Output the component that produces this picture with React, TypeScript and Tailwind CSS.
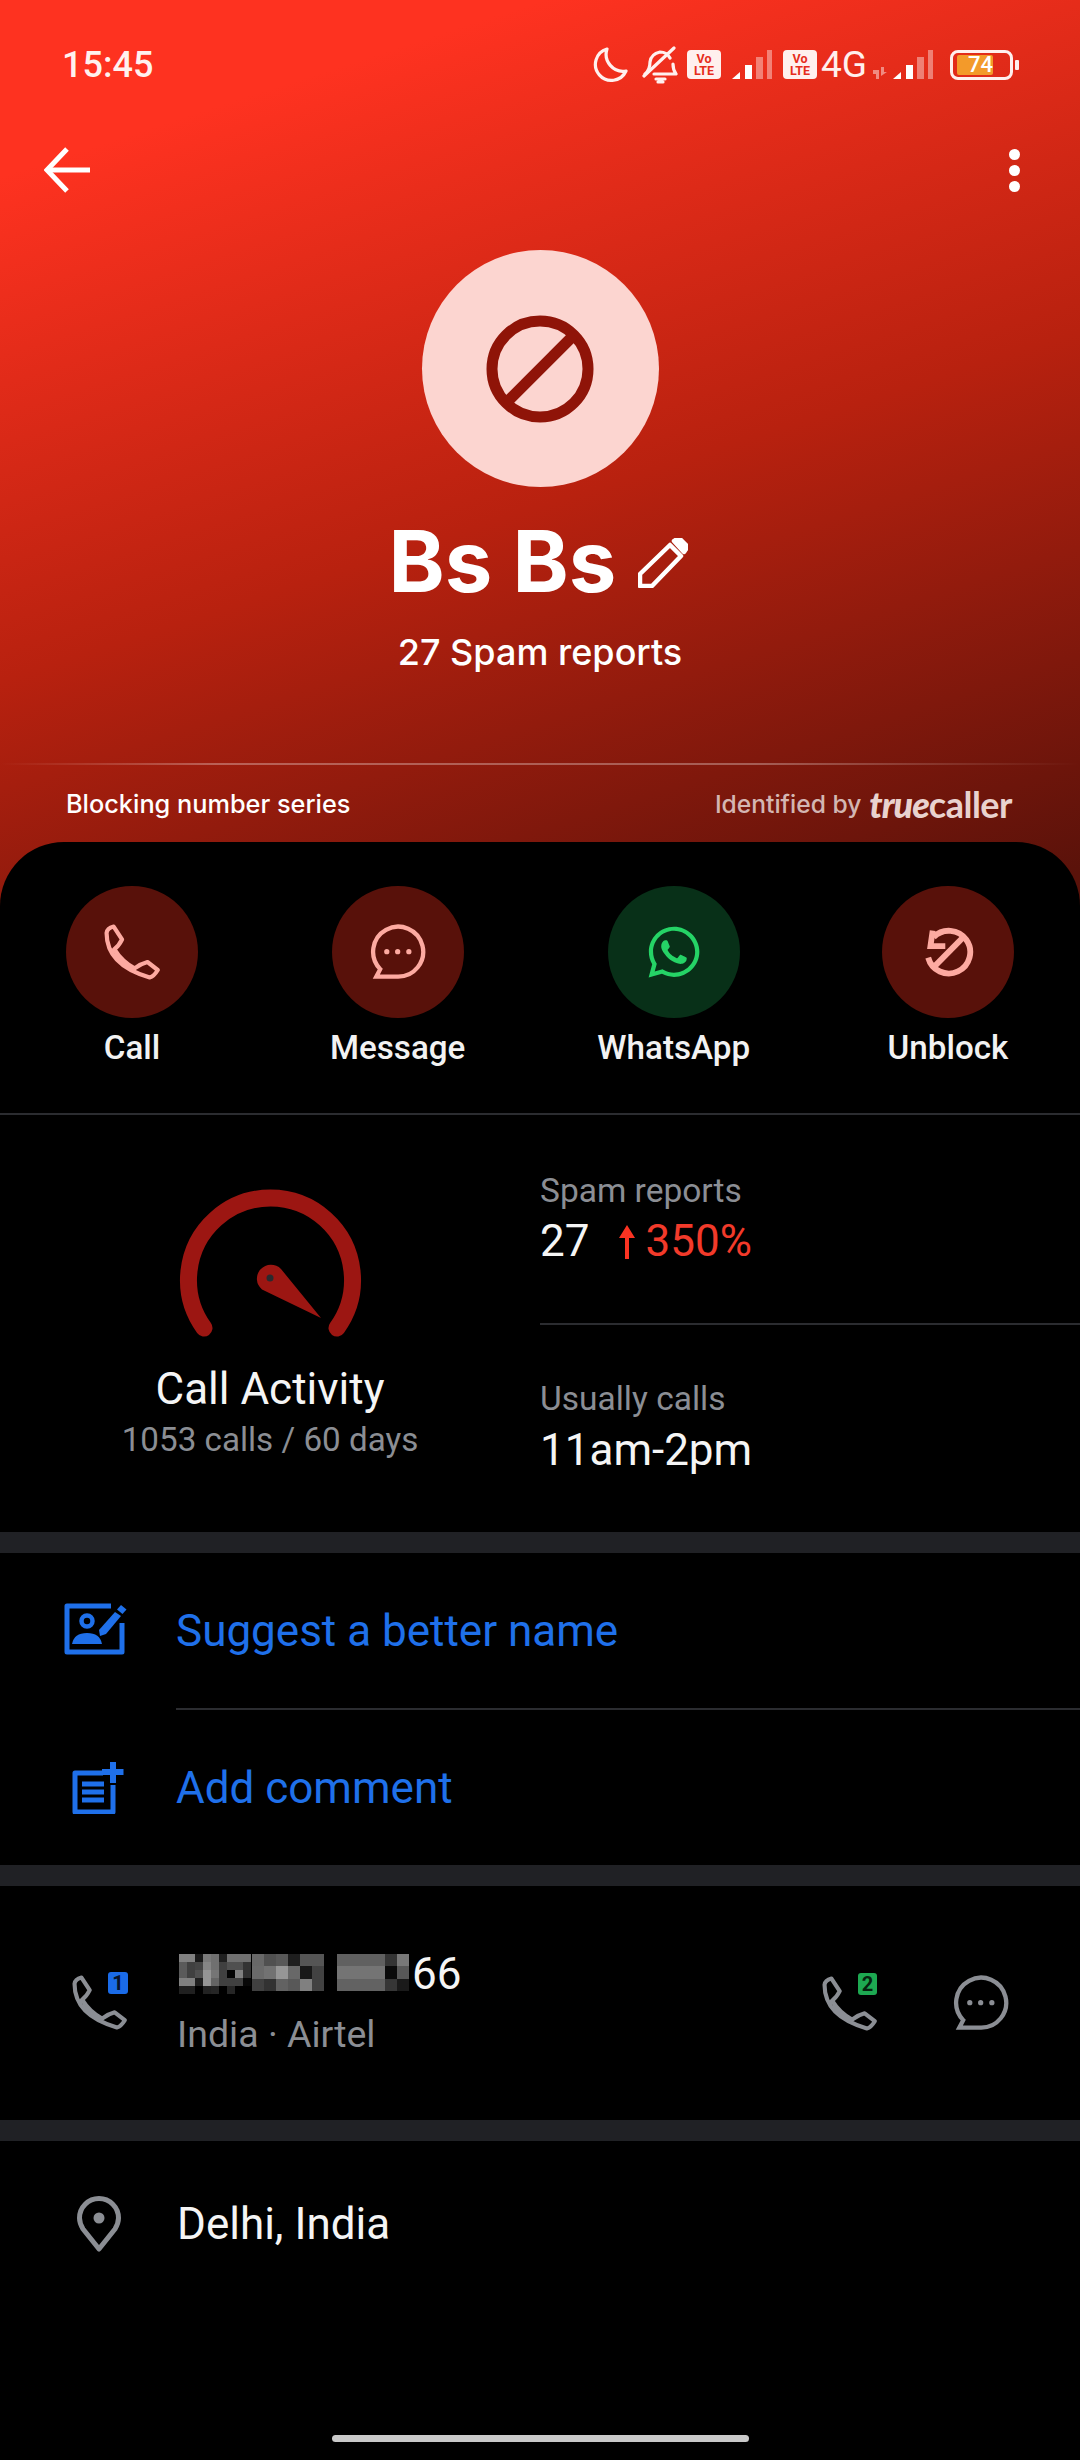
import { FaWhatsapp } from "react-icons/fa";

const roboto = { fontFamily: "Roboto, sans-serif" };

function Phone({ className }: { className: string }) {
  return (
    <svg viewBox="120 102 174 174" className={className} fill="none" stroke="currentColor" strokeWidth="13" strokeLinejoin="round">
      <path d="M150 110 L176 150 Q166 170 152 180 Q175 218 215 240 Q235 225 255 220 L287 245 Q275 265 262 268 Q128 230 128 130 Q130 115 150 110 Z" />
    </svg>
  );
}

function Bubble({ className }: { className: string }) {
  return (
    <svg viewBox="518 104 170 170" className={className} fill="none" stroke="currentColor" strokeWidth="13">
      <path d="M602 264 H537 L549 241 A76 76 0 1 1 602 264 Z" strokeLinejoin="miter" />
      <circle cx="569" cy="188" r="8" fill="currentColor" stroke="none" />
      <circle cx="602" cy="188" r="8" fill="currentColor" stroke="none" />
      <circle cx="636" cy="188" r="8" fill="currentColor" stroke="none" />
    </svg>
  );
}

function Action({ label, bg, children }: { label: string; bg: string; children: React.ReactNode }) {
  return (
    <div className="flex flex-col items-center">
      <div className={`flex h-[132px] w-[132px] items-center justify-center rounded-full ${bg}`}>{children}</div>
      <div className="mt-[10px] text-[33.2px] font-medium leading-[40px] text-[#f2f2f2]">{label}</div>
    </div>
  );
}

function Band() {
  return <div className="h-[21px] bg-[#202125]" />;
}

function Signal({ className }: { className?: string }) {
  return (
    <svg viewBox="0 0 40 30" className={className} fill="#ffffff">
      <path d="M0 29 L8 22 V29 Z" />
      <rect x="13" y="15" width="7" height="14" />
      <rect x="24" y="7" width="7" height="22" opacity="0.4" />
      <rect x="35" y="0" width="5" height="29" opacity="0.4" />
    </svg>
  );
}

function Volte() {
  return (
    <div className="flex h-[29px] w-[34px] flex-col items-center justify-center rounded-[4px] bg-[#fff0ee] text-[12.5px] font-bold leading-[12px] text-[#e62d1c]">
      <span>Vo</span>
      <span>LTE</span>
    </div>
  );
}

const MOSAIC: { x: number; y: number; w: number; h: number; rows: string[][] }[] = [
  {
    x: 2, y: 0, w: 8, h: 8,
    rows: [
      ["80", "80", "18", "7a", "70", "20", "70", "70", "70"],
      ["5a", "40", "45", "85", "70", "40", "50", "50", "34"],
      ["5a", "40", "50", "95", "75", "40", "04", "80", "30"],
      ["80", "80", "20", "95", "65", "40", "40", "40", "08"],
      ["20", "20", "00", "22", "26", "00", "26", "00", "00"],
    ],
  },
  {
    x: 75, y: 0, w: 12, h: 12.3,
    rows: [
      ["68", "50", "58", "1e", "55", "55"],
      ["6a", "72", "96", "68", "18", "42"],
      ["40", "32", "62", "58", "80", "42"],
    ],
  },
  {
    x: 160, y: 0, w: 12, h: 12.3,
    rows: [
      ["60", "60", "60", "60", "34", "78"],
      ["74", "74", "74", "74", "0a", "58"],
      ["62", "62", "62", "62", "36", "1a"],
    ],
  },
];

function Mosaic() {
  return (
    <svg viewBox="0 0 235 40" className="h-[40px] w-[235px]" shapeRendering="crispEdges">
      {MOSAIC.map((g, i) =>
        g.rows.map((row, r) =>
          row.map((v, c) => (
            <rect key={`${i}-${r}-${c}`} x={g.x + c * g.w} y={g.y + r * g.h} width={g.w} height={g.h} fill={`#${v}${v}${v}`} />
          ))
        )
      )}
    </svg>
  );
}

export default function App() {
  return (
    <div className="relative h-[2460px] w-[1080px] overflow-hidden bg-black text-white" style={roboto}>
      <div className="h-[910px] bg-[linear-gradient(162deg,#fe3220_14%,#b8210f_54%,#5a120a_97%)]">
        {/* status bar */}
        <div className="flex h-[130px] items-center pb-[1px] pl-[62px] pr-[61px]">
          <span className="text-[36px] font-medium leading-none text-[#fff1ef]">15:45</span>
          <div className="ml-auto flex items-center text-[#fff0ee]">
            <svg viewBox="0 0 36 36" className="h-[36px] w-[36px]" fill="none" stroke="currentColor" strokeWidth="3.2" strokeLinejoin="round">
              <path d="M15 2 A16 16 0 1 0 34 24 A17 17 0 0 1 15 2 Z" />
            </svg>
            <svg viewBox="0 0 36 38" className="ml-[14px] h-[38px] w-[36px]" fill="none" stroke="currentColor" strokeWidth="3.2" strokeLinecap="round" strokeLinejoin="round">
              <path d="M3 28 Q8 24 8 16 Q9 8 18 6 Q25 6 28 12 M31 18 Q31 24 34 28 H12" />
              <path d="M2 30 L32 2" />
              <path d="M14 33 H23 M16 36 H21" />
            </svg>
            <div className="ml-[9px]"><Volte /></div>
            <Signal className="ml-[11px] h-[30px] w-[40px]" />
            <div className="ml-[11px]"><Volte /></div>
            <span className="ml-[4px] text-[37px] font-normal leading-none">4G</span>
            <svg viewBox="0 0 14 12" className="ml-[6px] mt-[16px] h-[12px] w-[14px]" fill="#ffffff" opacity="0.45">
              <path d="M0 3 H6 V12 H3 V7 H0 Z M8 0 H11 V5 H14 L8 9 Z" />
            </svg>
            <Signal className="ml-[6px] h-[30px] w-[40px]" />
            <div className="relative ml-[17px] flex h-[30px] w-[63px] items-center rounded-[8px] border-[3px] border-[#fff0ee] pl-[4px]">
              <div className="h-[20px] w-[36px] rounded-[2px] bg-[#f39a2a]" />
              <span className="absolute left-[15px] top-[1px] text-[22px] font-medium leading-[22px] text-white">74</span>
            </div>
            <div className="ml-[2px] h-[10px] w-[4px] rounded-[1px] bg-[#fff0ee]" />
          </div>
        </div>
        {/* nav */}
        <div className="mt-[10px] flex h-[60px] items-center justify-between pl-[44px] pr-[60px]">
          <svg viewBox="0 0 46 46" className="h-[46px] w-[46px]" fill="none" stroke="#fff" strokeWidth="5">
            <path d="M46 23 H4" />
            <path d="M23 2 L3 23 L23 44" />
          </svg>
          <div className="flex flex-col gap-[5px]">
            <div className="h-[11px] w-[11px] rounded-full bg-white" />
            <div className="h-[11px] w-[11px] rounded-full bg-white" />
            <div className="h-[11px] w-[11px] rounded-full bg-white" />
          </div>
        </div>
        {/* avatar */}
        <div className="mt-[50px] flex justify-center">
          <div className="flex h-[237px] w-[237px] items-center justify-center rounded-full bg-[#fcd5d0]">
            <svg viewBox="0 0 108 108" className="h-[108px] w-[108px] blur-[0.6px]" fill="none" stroke="#8f1408" strokeWidth="11">
              <circle cx="54" cy="54" r="48" />
              <path d="M20 88 L88 20" />
            </svg>
          </div>
        </div>
        {/* name */}
        <div className="mt-[26px] flex h-[96px] items-center justify-center pr-[3px]" style={{ fontFamily: "Inter, sans-serif" }}>
          <span className="text-[85px] font-bold leading-none text-white">Bs Bs</span>
          <svg viewBox="0 0 50 50" className="ml-[22px] mt-[3px] h-[50px] w-[50px]" fill="none" stroke="#fff" strokeWidth="4.5" strokeLinejoin="round">
            <path d="M2 48 V36 L32 7 L43 18 L14 48 Z" />
            <path d="M36 3 L39 1 Q41 0 43 2 L48 7 Q50 9 48 11 L46 14 Z" fill="#fff" />
          </svg>
        </div>
        <div className="mt-[21px] text-center text-[36px] font-medium leading-[44px] text-white" style={{ fontFamily: "Inter, sans-serif" }}>
          27 Spam reports
        </div>
        {/* line + footer */}
        <div className="mt-[89px] h-[2px] bg-[linear-gradient(90deg,rgba(255,255,255,0)_0%,rgba(255,255,255,0.3)_20%,rgba(255,255,255,0.3)_70%,rgba(255,255,255,0)_100%)]" />
        <div className="mt-[21px] flex items-center justify-between pl-[66px] pr-[68px]" style={{ fontFamily: "Inter, sans-serif" }}>
          <span className="text-[25.3px] font-medium leading-[36px] text-white">Blocking number series</span>
          <span className="flex items-center text-[24.6px] font-medium leading-[36px] text-white/70">
            Identified by
            <span className="ml-[8px] text-[36px] leading-[36px] text-[#e9d2ce]" style={{ fontFamily: "Lato, sans-serif" }}>
              <span className="font-black italic tracking-[-1px]">true</span>
              <span className="font-bold tracking-[-0.5px]">caller</span>
            </span>
          </span>
        </div>
      </div>

      {/* sheet */}
      <div className="relative -mt-[68px] rounded-t-[64px] bg-black">
        <div className="flex justify-between px-[66px] pt-[44px]">
          <Action label="Call" bg="bg-[#58110a]">
            <Phone className="h-[56px] w-[56px] text-[#fdaaa1]" />
          </Action>
          <Action label="Message" bg="bg-[#58110a]">
            <Bubble className="h-[56px] w-[56px] text-[#fdaaa1]" />
          </Action>
          <Action label="WhatsApp" bg="bg-[#083018]">
            <FaWhatsapp className="h-[58px] w-[58px] text-[#25d366]" />
          </Action>
          <Action label="Unblock" bg="bg-[#58110a]">
            <svg viewBox="0 0 24 24" className="h-[54px] w-[54px] text-[#fdaaa1]" fill="none" stroke="currentColor" strokeWidth="2.6">
              <path d="M3.2 14.5 A9.5 9.5 0 1 0 5.6 5.4" />
              <path d="M5.2 2.5 L4.2 9.4 H10.8" />
              <path d="M18.6 5.6 L6 18.4" />
            </svg>
          </Action>
        </div>
        <div className="mt-[45px] h-[2px] bg-[#2b2c30]" />

        {/* stats */}
        <div className="flex h-[417px]">
          <div className="flex w-[540px] flex-col items-center">
            <svg viewBox="0 0 190 160" className="mt-[67px] h-[160px] w-[190px]" fill="none">
              <path d="M29 146 A82 82 0 1 1 162 146" stroke="#9c1612" strokeWidth="17" strokeLinecap="round" />
              <path d="M146 136 L106 87 A14 14 0 1 0 87 107.5 Z" fill="#9c1612" />
              <circle cx="95" cy="96" r="3.5" fill="#2a2a2e" />
            </svg>
            <div className="mt-[21px] text-[44px] leading-[52px] text-[#f5f5f5]">Call Activity</div>
            <div className="mt-[5px] text-[33.2px] leading-[40px] text-[#8b8e94]">1053 calls / 60 days</div>
          </div>
          <div className="flex flex-1 flex-col">
            <div className="h-[210px] border-b-2 border-[#2b2c30] pt-[56px]">
              <div className="text-[33.5px] leading-[40px] text-[#8b8e94]">Spam reports</div>
              <div className="mt-[4px] flex items-center text-[44px] leading-[52px]">
                <span className="text-[#f5f5f5]">27</span>
                <svg viewBox="0 0 16 34" className="ml-[30px] mr-[10px] mt-[2px] h-[34px] w-[16px]" fill="#fb3322">
                  <path d="M8 0 L16 13 H10 V34 H6 V13 H0 Z" />
                </svg>
                <span className="text-[#f23a2a]">350%</span>
              </div>
            </div>
            <div className="pt-[54px]">
              <div className="text-[33.5px] leading-[40px] text-[#8b8e94]">Usually calls</div>
              <div className="mt-[5px] text-[44px] leading-[52px] text-[#f5f5f5]">11am-2pm</div>
            </div>
          </div>
        </div>
        <Band />

        {/* actions */}
        <div className="flex h-[155px] items-center">
          <div className="flex w-[176px] justify-start pl-[64px] pb-[4px]">
            <svg viewBox="0 0 64 52" className="h-[52px] w-[64px] text-[#1f70ea]" fill="none" stroke="currentColor" strokeWidth="5" strokeLinejoin="round">
              <path d="M47 3 H3 V49 H58 V20" />
              <circle cx="23" cy="18" r="5.5" strokeWidth="4.5" />
              <path d="M8 41 Q10 30 23 30 Q36 30 38 41 Z" fill="currentColor" stroke="none" />
              <path d="M35 27 L36 33 L42 31 L57 13 L51 9 Z" fill="currentColor" stroke="none" />
              <path d="M53 6.5 L57 2 L62.5 6.5 L58.5 11 Z" fill="currentColor" stroke="none" />
            </svg>
          </div>
          <span className="text-[44px] leading-[52px] text-[#1f70ea]">Suggest a better name</span>
        </div>
        <div className="ml-[176px] h-[2px] bg-[#2b2c30]" />
        <div className="flex h-[155px] items-center">
          <div className="flex w-[176px] justify-start pl-[72px]">
            <svg viewBox="0 0 52 52" className="h-[52px] w-[52px] text-[#1f70ea]" fill="none" stroke="currentColor" strokeWidth="5" strokeLinejoin="round">
              <path d="M31 11 H3 V50 H41 V23" />
              <path d="M10 22 H32 M10 30 H32 M10 38 H32" strokeWidth="5" />
              <path d="M30 10 H51.5 M41 0 V21" strokeWidth="6" />
            </svg>
          </div>
          <span className="text-[44px] leading-[52px] text-[#1f70ea]">Add comment</span>
        </div>
        <Band />

        {/* number */}
        <div className="flex h-[234px] items-center pr-[71px]">
          <div className="relative ml-[72px] mt-[-2px] h-[54px] w-[55px]">
            <Phone className="h-[55px] w-[55px] text-[#8b8e94]" />
            <div className="absolute -top-[3px] left-[36px] flex h-[22px] w-[20px] items-center justify-center rounded-[3px] bg-[#1a6be8] text-[20px] font-bold leading-none text-[#06122a]">1</div>
          </div>
          <div className="ml-[50px] mt-[2px] flex flex-col">
            <div className="flex items-start">
              <Mosaic />
              <span className="text-[44px] leading-[40px] text-[#f5f5f5]">66</span>
            </div>
            <span className="mt-[20px] text-[37.5px] leading-[40px] text-[#8b8e94]">India · Airtel</span>
          </div>
          <div className="relative ml-auto h-[54px] w-[55px]">
            <Phone className="h-[55px] w-[55px] text-[#8b8e94]" />
            <div className="absolute -top-[3px] left-[36px] flex h-[22px] w-[19px] items-center justify-center rounded-[3px] bg-[#1da851] text-[20px] font-bold leading-none text-[#06220f]">2</div>
          </div>
          <Bubble className="ml-[76px] h-[56px] w-[56px] text-[#8b8e94]" />
        </div>
        <Band />

        {/* location */}
        <div className="flex h-[166px] items-center">
          <svg viewBox="0 0 44 56" className="ml-[77px] h-[56px] w-[44px] text-[#8b8e94]" fill="none" stroke="currentColor" strokeWidth="5" strokeLinejoin="round">
            <path d="M22 53 L6 33 Q2.5 27 2.5 22 A19.5 19.5 0 0 1 41.5 22 Q41.5 27 38 33 Z" />
            <circle cx="22" cy="22" r="5.5" fill="currentColor" stroke="none" />
          </svg>
          <span className="ml-[56px] text-[44px] leading-[52px] text-[#f5f5f5]">Delhi, India</span>
        </div>
      </div>

      {/* home indicator */}
      <div className="absolute bottom-[18px] left-[332px] h-[7px] w-[417px] rounded-full bg-[#c9c9c9]" />
    </div>
  );
}
